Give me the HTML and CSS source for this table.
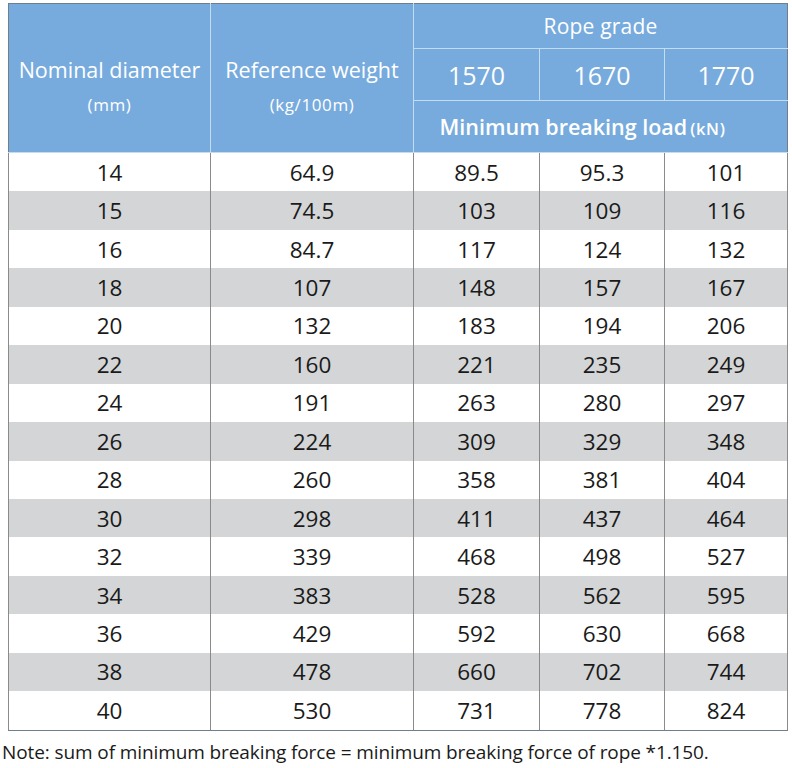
FILE: index.html
```html
<!DOCTYPE html>
<html>
<head>
<meta charset="utf-8">
<link rel="stylesheet" href="styles.css">
</head>
<body>
<table class="spec">
  <colgroup>
    <col class="c1"><col class="c2"><col class="c3"><col class="c4"><col class="c5">
  </colgroup>
  <thead>
    <tr class="h1">
      <th rowspan="3" class="main"><div>Nominal diameter</div><div class="unit">(mm)</div></th>
      <th rowspan="3" class="main"><div>Reference weight</div><div class="unit">(kg/100m)</div></th>
      <th colspan="3" class="grade">Rope grade</th>
    </tr>
    <tr class="h2">
      <th class="num">1570</th><th class="num">1670</th><th class="num">1770</th>
    </tr>
    <tr class="h3">
      <th colspan="3" class="load">Minimum breaking load<span class="kn">(kN)</span></th>
    </tr>
  </thead>
  <tbody>
    <tr><td>14</td><td>64.9</td><td>89.5</td><td>95.3</td><td>101</td></tr>
    <tr><td>15</td><td>74.5</td><td>103</td><td>109</td><td>116</td></tr>
    <tr><td>16</td><td>84.7</td><td>117</td><td>124</td><td>132</td></tr>
    <tr><td>18</td><td>107</td><td>148</td><td>157</td><td>167</td></tr>
    <tr><td>20</td><td>132</td><td>183</td><td>194</td><td>206</td></tr>
    <tr><td>22</td><td>160</td><td>221</td><td>235</td><td>249</td></tr>
    <tr><td>24</td><td>191</td><td>263</td><td>280</td><td>297</td></tr>
    <tr><td>26</td><td>224</td><td>309</td><td>329</td><td>348</td></tr>
    <tr><td>28</td><td>260</td><td>358</td><td>381</td><td>404</td></tr>
    <tr><td>30</td><td>298</td><td>411</td><td>437</td><td>464</td></tr>
    <tr><td>32</td><td>339</td><td>468</td><td>498</td><td>527</td></tr>
    <tr><td>34</td><td>383</td><td>528</td><td>562</td><td>595</td></tr>
    <tr><td>36</td><td>429</td><td>592</td><td>630</td><td>668</td></tr>
    <tr><td>38</td><td>478</td><td>660</td><td>702</td><td>744</td></tr>
    <tr><td>40</td><td>530</td><td>731</td><td>778</td><td>824</td></tr>
  </tbody>
</table>
<p class="note">Note: sum of minimum breaking force = minimum breaking force of rope *1.150.</p>
</body>
</html>
```

FILE: styles.css
```css
html, body {
  margin: 0;
  padding: 0;
  background: #ffffff;
}
body {
  font-family: "Open Sans", "Noto Sans", sans-serif;
  color: #1a1a1a;
}
.spec {
  margin: 3px 0 0 8px;
  width: 779px;
  border-collapse: collapse;
  table-layout: fixed;
  border: 1px solid #6f7f8d;
}
.c1 { width: 202px; }
.c2 { width: 203px; }
.c3 { width: 126px; }
.c4 { width: 125px; }
.c5 { width: 123px; }

.spec thead th {
  background: #77abdd;
  color: #ffffff;
  font-weight: normal;
  padding: 0;
  border: 1px solid #c4dcf2;
  text-align: center;
  white-space: nowrap;
}
.spec thead tr:first-child th { border-top-color: #6f7f8d; }
.spec thead th:first-child { border-left-color: #6f7f8d; }
.spec thead tr.h1 th:last-child,
.spec thead tr.h2 th:last-child,
.spec thead tr.h3 th:last-child { border-right-color: #6f7f8d; }
.spec thead th.main {
  font-size: 21.5px;
  letter-spacing: 0;
  vertical-align: top;
  padding-top: 51px;
  line-height: 30px;
}
.spec thead th.main .unit {
  font-size: 17px;
  letter-spacing: 0.6px;
  margin-top: 8px;
  line-height: 24px;
}
.h1 { height: 45px; }
.spec thead th.grade { font-size: 21px; letter-spacing: 0.2px; }
.h2 { height: 52px; }
.spec thead th.num { font-size: 25px; letter-spacing: 0; }
.h3 { height: 52px; }
.spec thead th.load {
  font-size: 21.5px;
  font-weight: 600;
  letter-spacing: 0;
  padding-right: 36px;
}
.spec thead th.load .kn { font-size: 16.5px; letter-spacing: 0.6px; margin-left: 3px; }

.spec tbody td {
  height: 38.45px;
  padding: 0;
  text-align: center;
  font-size: 22.5px;
  letter-spacing: 0;
  border-left: 1px solid #8a8a8a;
  border-right: 1px solid #8a8a8a;
}
.spec tbody tr:nth-child(even) td { background: #d3d5d6; }
.spec tbody tr:last-child td { border-bottom: 1px solid #6f7f8d; }

.note {
  margin: 8px 0 0 2px;
  font-size: 19px;
  letter-spacing: -0.1px;
  line-height: 26px;
  color: #1a1a1a;
}
```
